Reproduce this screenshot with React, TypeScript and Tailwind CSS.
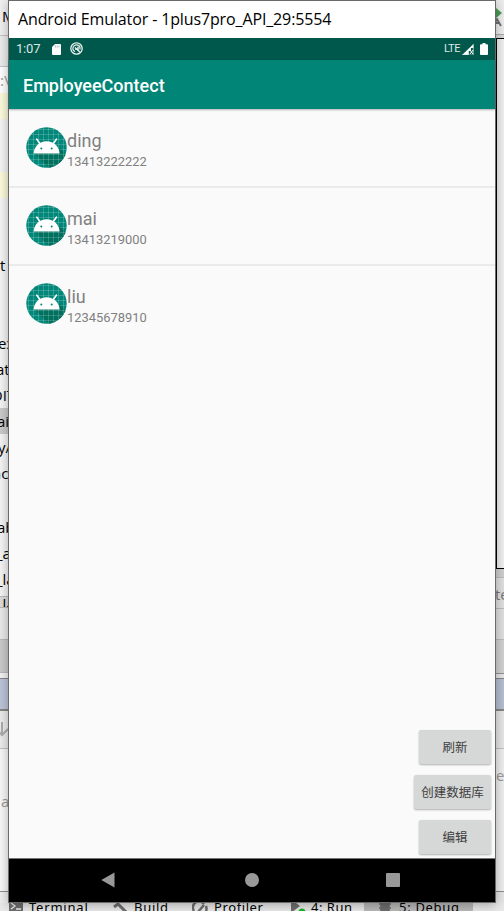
import type { ReactNode } from 'react';

type BandProps = { className: string; children?: ReactNode };

function Band({ className, children }: BandProps) {
  return <div className={`w-full shrink-0 whitespace-pre ${className}`}>{children}</div>;
}

function EditorLeft() {
  return (
    <div className="flex h-[903px] w-2 flex-col overflow-hidden bg-[#f4f4f4] font-['Open_Sans'] text-[15px] leading-[26px] text-black">
      <Band className="h-[35px] bg-[#f0f0f0] pl-[2px] pt-[3px]">M</Band>
      <Band className="h-[31px] border-t border-[#c4c4c4] bg-[#ececec]" />
      <Band className="h-[27px] border-t border-[#c4c4c4] bg-white text-[#999999]">:\</Band>
      <Band className="h-[26px] bg-[#fbfadb]" />
      <Band className="h-[53px]" />
      <Band className="h-[26px] bg-[#fbfadb]" />
      <Band className="h-[54px]" />
      <Band className="h-[26px]">t</Band>
      <Band className="h-[52px]" />
      <Band className="h-[26px]"><span className="-ml-[2px]">ex</span></Band>
      <Band className="h-[26px]"><span className="-ml-[4px]">at</span></Band>
      <Band className="h-[26px]"><span className="-ml-[9px]">OIT</span></Band>
      <Band className="h-[26px] bg-[#cacaca]"><span className="-ml-[3px]">ai</span></Band>
      <Band className="h-[26px]"><span className="-ml-[2px]">y/</span></Band>
      <Band className="h-[54px]"><span className="-ml-[8px]">nc</span></Band>
      <Band className="h-[26px]"><span className="-ml-[3px]">ab</span></Band>
      <Band className="h-[26px]"><span className="-ml-[4px]">_a</span></Band>
      <Band className="h-[30px]"><span className="-ml-[4px]">_la</span></Band>
      <Band className="h-[12px] overflow-hidden border-y border-[#b8b8b8] bg-[#dcdcdc] leading-[14px]"><span className="-ml-[4px]">_la</span></Band>
      <Band className="h-[31px] bg-[#e9e9e9]" />
      <Band className="h-[34px] border-y border-[#b8b8b8] bg-[#c9c9c9]" />
      <Band className="h-[5px] bg-[#f2f2f2]" />
      <Band className="h-[33px] border-b-2 border-t border-[#858585] bg-[#bbc5d8]" />
      <Band className="h-[38px] border-b border-[#c0c0c0] bg-[#ebebeb] pt-[11px]">
        <svg className="-ml-[3px] h-4 w-[11px]" viewBox="0 0 11 16" fill="none" stroke="#adadad" strokeWidth="2">
          <path d="M5 0v13M0 8l5 5 6-6" />
        </svg>
      </Band>
      <Band className="h-[142px] bg-[#f7f7f7] pl-[1px] pt-[39px] text-[#999999]">a</Band>
      <Band className="h-3 border-t border-[#8c8c8c] bg-[#ededed]" />
    </div>
  );
}

function EditorRight() {
  return (
    <div className="flex h-[903px] w-2 flex-col overflow-hidden bg-[#ededed] font-['Open_Sans'] text-[15px] leading-[19px]">
      <Band className="h-[34px] bg-[#ededed] pt-2">
        <svg className="h-5 w-2" viewBox="0 0 8 20">
          <path d="M0 0l6 5-6 5z" fill="#499c54" />
          <path d="M-3 18L1 11l4 7M-1 15h4" fill="none" stroke="#6e6e6e" strokeWidth="1.8" />
        </svg>
      </Band>
      <Band className="h-[4px] border-t border-[#a8a8a8] bg-[#d7d7d7]" />
      <Band className="h-[531px] border-y border-l border-black bg-[#efefef]" />
      <Band className="h-[8px] bg-[#cecece]" />
      <Band className="h-[32px] border-y border-[#bcbcbc] bg-[#dfdfdf] pt-[7px] text-[#777777]"><span className="-ml-[1px]">te</span></Band>
      <Band className="h-[31px] border-b border-[#bcbcbc] bg-[#dfdfdf]" />
      <Band className="h-[34px] border-b border-[#909090] bg-[#d1d1d1]" />
      <Band className="h-[4px] bg-[#e6e6e6]" />
      <Band className="h-[33px] border-b-2 border-t border-[#858585] bg-[#b4bed0]" />
      <Band className="h-[38px] border-b border-[#c0c0c0] bg-[#e6e6e6]" />
      <Band className="h-[142px] bg-[#eeeeee] pt-[17px] text-[#999999]">e</Band>
      <Band className="h-3 border-t border-[#8c8c8c] bg-[#e5e5e5]" />
    </div>
  );
}

function LauncherIcon() {
  return (
    <svg className="h-[41px] w-[41px] shrink-0" viewBox="0 0 41 41">
      <defs>
        <clipPath id="disc"><circle cx="20.5" cy="20.5" r="20.2" /></clipPath>
      </defs>
      <g clipPath="url(#disc)">
        <rect width="41" height="41" fill="#018779" />
        <path d="M8 26l15 15h18V29l-7-8z" fill="#00705f" />
        <path
          d="M2.500 0v41M7.500 0v41M12.500 0v41M17.500 0v41M22.500 0v41M27.500 0v41M32.500 0v41M37.500 0v41M0 2.500h41M0 7.500h41M0 12.500h41M0 17.500h41M0 22.500h41M0 27.500h41M0 32.500h41M0 37.500h41"
          stroke="#ffffff" strokeOpacity="0.18" strokeWidth="1"
        />
      </g>
      <path d="M10.8 12.2l3.600 5M30.400 12.200l-3.600 5" stroke="#fff" strokeWidth="1.600" strokeLinecap="round" />
      <path d="M7.600 26.400c.4-6.800 5.900-12.200 13-12.200s12.600 5.400 13 12.200z" fill="#fff" />
      <circle cx="15.300" cy="21.400" r="1" fill="#008577" />
      <circle cx="25.700" cy="21.400" r="1" fill="#008577" />
    </svg>
  );
}

const contacts = [
  { name: 'ding', phone: '13413222222' },
  { name: 'mai', phone: '13413219000' },
  { name: 'liu', phone: '12345678910' },
];

function StatusBar() {
  return (
    <div className="flex h-[22px] items-center bg-[#00574b] pl-[7px] pr-[7px] font-['Roboto'] text-white">
      <span className="w-[36px] text-[13px] leading-[22px] tracking-[-0.200px] text-[#dce8e6]">1:07</span>
      <svg className="h-[11px] w-[9px]" viewBox="0 0 9 11">
        <path d="M3 0h5q1 0 1 1v9q0 1-1 1H1q-1 0-1-1V3z" fill="#fff" />
        <path d="M3.500 1.500v2M5.200 1.500v2M7 1.500v2" stroke="#6d9992" strokeWidth=".6" />
      </svg>
      <svg className="-mt-px ml-[9px] h-[13px] w-[13px]" viewBox="0 0 13 13" fill="none" stroke="#e9f1ef">
        <circle cx="6.500" cy="6.500" r="5.700" strokeWidth="1.300" />
        <path d="M5 9.600A3.500 3.500 0 1 1 9.800 7.500" strokeWidth="1.200" />
        <path d="M5 5.500l4.800 4.500M8 4.800v2.400H5.200" strokeWidth="1.500" />
      </svg>
      <span className="ml-auto text-[11px] leading-[22px] tracking-[-0.400px] text-[#dce8e6]">LTE</span>
      <svg className="ml-[2px] h-[11px] w-[12px]" viewBox="0 0 12 11">
        <path d="M11.500 0v4H9v3H6.800v4H0z" fill="#fff" />
        <path d="M11.300 0v11H0" fill="none" stroke="#a9c6c1" strokeWidth=".8" />
        <path d="M8 6l3 4M11 6l-3 4" stroke="#fff" strokeWidth="1" />
      </svg>
      <svg className="-mt-px ml-[6px] h-3 w-2" viewBox="0 0 8 12">
        <path d="M2.500 0h3v1.200H7q1 0 1 1V11q0 1-1 1H1q-1 0-1-1V2.200q0-1 1-1h1.500z" fill="#fff" />
      </svg>
    </div>
  );
}

function EmulatorWindow() {
  return (
    <div className="z-10 flex h-[903px] w-[488px] flex-col border border-[#696969] bg-[#fafafa] shadow-[0_2px_10px_rgba(0,0,0,0.3)]">
      <div className="h-[37px] bg-white pl-[9px] font-['Open_Sans'] text-[16px] leading-[37px] text-black">
        <span className="whitespace-nowrap tracking-[-0.130px]">Android Emulator - 1plus7pro_API_29:5554</span>
      </div>
      <StatusBar />
      <div className="z-10 h-[49px] bg-[#008577] pl-[14px] font-['Roboto'] text-[18px] font-medium leading-[51px] text-white shadow-[0_1px_2px_rgba(0,0,0,0.3)]">
        EmployeeContect
      </div>
      <div className="flex flex-col pt-px">
        {contacts.map((c) => (
          <div
            key={c.name}
            className="flex h-[78px] items-start border-b-2 border-[#ebebeb] pl-[17px] pt-[17px] last:border-b-0"
          >
            <LauncherIcon />
            <div className="font-['Roboto'] text-[#808080]">
              <div className="pt-[3px] text-[18px] leading-[22px]">{c.name}</div>
              <div className="text-[12.900px] leading-[19px]">{c.phone}</div>
            </div>
          </div>
        ))}
      </div>
      <div className="mt-auto flex flex-col items-end gap-[11px] pb-[4px] pr-[4px] font-['Roboto','Noto_Sans_CJK_SC',sans-serif] text-[12.500px] leading-[33px] text-[#404040]">
        <button className="h-[34px] w-[72px] rounded-[2px] bg-[#d6d7d7] shadow-[0_1px_2px_rgba(0,0,0,0.3)]">刷新</button>
        <button className="h-[34px] w-[77px] whitespace-nowrap rounded-[2px] bg-[#d6d7d7] shadow-[0_1px_2px_rgba(0,0,0,0.3)]">创建数据库</button>
        <button className="h-[34px] w-[72px] rounded-[2px] bg-[#d6d7d7] shadow-[0_1px_2px_rgba(0,0,0,0.3)]">编辑</button>
      </div>
      <div className="flex h-[44px] items-center border-t border-[#777777] bg-black pb-[1px] pl-[92px]">
        <svg className="h-4 w-[14px]" viewBox="0 0 14 16"><path d="M13.500 .5v15L.3 8z" fill="#999" /></svg>
        <div className="ml-[130px] h-[14px] w-[14px] rounded-full bg-[#999999]" />
        <div className="ml-[127px] h-[14px] w-[14px] rounded-[1px] bg-[#999999]" />
      </div>
    </div>
  );
}

function ToolStrip() {
  return (
    <div className="flex h-2 w-full items-start overflow-hidden bg-[#e8e8e8] pl-[9px] font-['Noto_Sans'] text-[13px] leading-[8px] text-black">
      <svg className="h-2 w-[14px]" viewBox="0 0 14 8">
        <path d="M0 0h14v8H0z" fill="#6e6e6e" />
        <path d="M2 0l4 3-4 3M7 6h5" fill="none" stroke="#eee" strokeWidth="1.300" />
      </svg>
      <span className="ml-[6px] w-[84px] tracking-[0.800px]">Terminal</span>
      <svg className="h-2 w-4" viewBox="0 0 16 8"><path d="M1 4l4-3M4 0l10 10" fill="none" stroke="#6e6e6e" strokeWidth="3" /></svg>
      <span className="ml-[5px] w-[58px] tracking-[0.700px]">Build</span>
      <svg className="h-2 w-4" viewBox="0 0 16 8">
        <path d="M2 8A6 6 0 0 1 12 1M14 3q1 3 0 6M6 9l6-7" fill="none" stroke="#6e6e6e" strokeWidth="2.500" />
      </svg>
      <span className="ml-[6px] w-[76px] tracking-[0.600px]">Profiler</span>
      <svg className="h-2 w-4" viewBox="0 0 16 8"><path d="M1 -4l9 7-9 7z" fill="#6e6e6e" /><circle cx="12" cy="9" r="3.500" fill="#19b52b" /></svg>
      <span className="ml-[5px] w-[53px] tracking-[0.500px]">4: Run</span>
      <div className="flex h-2 w-[109px] bg-[#b9b9b9] pl-[15px]">
        <svg className="h-2 w-3" viewBox="0 0 12 8"><path d="M2 0h8v8H2zM0 1h12M0 5h12" fill="#6e6e6e" stroke="#6e6e6e" strokeWidth="1.500" /></svg>
        <span className="ml-[8px] whitespace-nowrap tracking-[0.700px]">5: Debug</span>
      </div>
    </div>
  );
}

export default function App() {
  return (
    <div className="flex h-[911px] w-[504px] flex-col overflow-hidden bg-[#f0f0f0]">
      <div className="flex">
        <EditorLeft />
        <EmulatorWindow />
        <EditorRight />
      </div>
      <ToolStrip />
    </div>
  );
}
